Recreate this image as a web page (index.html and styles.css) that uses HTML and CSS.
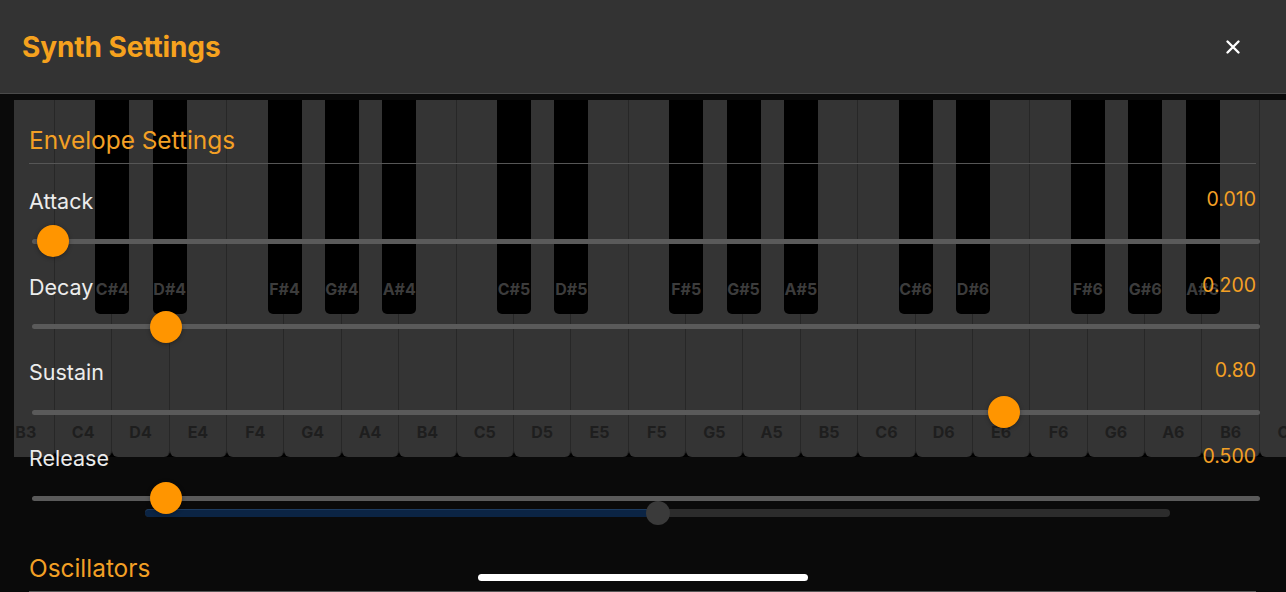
FILE: index.html
```html
<!DOCTYPE html>
<html lang="en">
<head>
<meta charset="utf-8">
<title>Synth Settings</title>
<link rel="stylesheet" href="styles.css">
</head>
<body>
<div class="screen">
  <header class="topbar">
    <h1 class="title">Synth Settings</h1>
    <button class="close" aria-label="Close">
      <svg width="16" height="16" viewBox="0 0 16 16"><path d="M2.5 2.5 L13.5 13.5 M13.5 2.5 L2.5 13.5" stroke="#fff" stroke-width="2.4" stroke-linecap="round"/></svg>
    </button>
  </header>
  <div class="stage">
    <div class="piano-layer">
      <div class="keyboard">
        <div class="keys">
          <div class="wkey"><span class="wlabel">B3</span></div>
          <div class="wkey"><span class="wlabel">C4</span><div class="bkey"><span class="blabel">C#4</span></div></div>
          <div class="wkey"><span class="wlabel">D4</span><div class="bkey"><span class="blabel">D#4</span></div></div>
          <div class="wkey"><span class="wlabel">E4</span></div>
          <div class="wkey"><span class="wlabel">F4</span><div class="bkey"><span class="blabel">F#4</span></div></div>
          <div class="wkey"><span class="wlabel">G4</span><div class="bkey"><span class="blabel">G#4</span></div></div>
          <div class="wkey"><span class="wlabel">A4</span><div class="bkey"><span class="blabel">A#4</span></div></div>
          <div class="wkey"><span class="wlabel">B4</span></div>
          <div class="wkey"><span class="wlabel">C5</span><div class="bkey"><span class="blabel">C#5</span></div></div>
          <div class="wkey"><span class="wlabel">D5</span><div class="bkey"><span class="blabel">D#5</span></div></div>
          <div class="wkey"><span class="wlabel">E5</span></div>
          <div class="wkey"><span class="wlabel">F5</span><div class="bkey"><span class="blabel">F#5</span></div></div>
          <div class="wkey"><span class="wlabel">G5</span><div class="bkey"><span class="blabel">G#5</span></div></div>
          <div class="wkey"><span class="wlabel">A5</span><div class="bkey"><span class="blabel">A#5</span></div></div>
          <div class="wkey"><span class="wlabel">B5</span></div>
          <div class="wkey"><span class="wlabel">C6</span><div class="bkey"><span class="blabel">C#6</span></div></div>
          <div class="wkey"><span class="wlabel">D6</span><div class="bkey"><span class="blabel">D#6</span></div></div>
          <div class="wkey"><span class="wlabel">E6</span></div>
          <div class="wkey"><span class="wlabel">F6</span><div class="bkey"><span class="blabel">F#6</span></div></div>
          <div class="wkey"><span class="wlabel">G6</span><div class="bkey"><span class="blabel">G#6</span></div></div>
          <div class="wkey"><span class="wlabel">A6</span><div class="bkey"><span class="blabel">A#6</span></div></div>
          <div class="wkey"><span class="wlabel">B6</span></div>
          <div class="wkey"><span class="wlabel">C7</span></div>
        </div>
      </div>
      <div class="scroller">
        <div class="scroll-fill" style="width: 50%"></div>
        <div class="scroll-thumb"></div>
      </div>
    </div>

    <div class="settings">
      <h2 class="section">Envelope Settings</h2>
      <div class="divider"></div>

      <div class="params">
        <div class="param">
          <div class="param-head"><span class="param-name">Attack</span><span class="param-value">0.010</span></div>
          <div class="slider"><div class="track"></div><div class="thumb" style="left: 5px"></div></div>
        </div>
        <div class="param">
          <div class="param-head"><span class="param-name">Decay</span><span class="param-value">0.200</span></div>
          <div class="slider"><div class="track"></div><div class="thumb" style="left: 118px"></div></div>
        </div>
        <div class="param">
          <div class="param-head"><span class="param-name">Sustain</span><span class="param-value">0.80</span></div>
          <div class="slider"><div class="track"></div><div class="thumb" style="left: 956px"></div></div>
        </div>
        <div class="param">
          <div class="param-head"><span class="param-name">Release</span><span class="param-value">0.500</span></div>
          <div class="slider"><div class="track"></div><div class="thumb" style="left: 118px"></div></div>
        </div>
      </div>

      <h2 class="section section-osc">Oscillators</h2>
      <div class="divider"></div>
    </div>

    <div class="home-indicator"></div>
  </div>
</div>
</body>
</html>
```

FILE: styles.css
```css
* { box-sizing: border-box; }

html, body {
  margin: 0;
  padding: 0;
  background: #0a0a0a;
}

body {
  font-family: Inter, "Liberation Sans", Arial, sans-serif;
  width: 1286px;
  height: 592px;
  overflow: hidden;
}

.screen {
  width: 1286px;
  height: 592px;
  display: flex;
  flex-direction: column;
  overflow: hidden;
}

.topbar {
  height: 94px;
  flex: none;
  background: #333333;
  border-bottom: 1px solid #4a4a4a;
  display: flex;
  align-items: center;
  justify-content: space-between;
  padding: 0 45px 0 22px;
}

.title {
  margin: 0;
  color: #f6a21e;
  font-size: 28px;
  font-weight: 700;
  letter-spacing: -0.1px;
}

.close {
  background: none;
  border: none;
  padding: 0;
  width: 16px;
  height: 16px;
  display: flex;
}

.stage {
  flex: 1;
  min-height: 0;
  display: grid;
  grid-template-columns: minmax(0, 1fr);
  grid-template-rows: minmax(0, 1fr);
  overflow: hidden;
}

.stage > * {
  grid-area: 1 / 1;
  min-width: 0;
}

/* Piano background layer */
.piano-layer {
  position: relative;
  z-index: 0;
  padding: 6px 0 0 14px;
  overflow: hidden;
}

.keyboard {
  height: 357px;
  overflow: hidden;
  background: #000;
}

.keys {
  display: flex;
  height: 100%;
  margin-left: -16.4px;
}

.wkey {
  position: relative;
  flex: none;
  width: 57.38px;
  height: 100%;
  background: #343434;
  border-right: 1.5px solid #272727;
  border-radius: 0 0 6px 6px;
  display: flex;
  align-items: flex-end;
  justify-content: center;
  padding-bottom: 14px;
}

.wlabel {
  color: #1e1e1e;
  font-size: 16px;
  font-weight: 700;
  line-height: 22px;
}

.bkey {
  position: absolute;
  z-index: 1;
  top: 0;
  left: 40.4px;
  width: 34px;
  height: 214px;
  background: #000;
  border-radius: 0 0 5px 5px;
  display: flex;
  align-items: flex-end;
  justify-content: center;
  padding-bottom: 14px;
}

.blabel {
  color: #3c3c3c;
  font-size: 16px;
  font-weight: 700;
  line-height: 22px;
  white-space: nowrap;
}

.scroller {
  margin: 52px 0 0 131px;
  width: 1025px;
  height: 8px;
  border-radius: 4px;
  background: #2c2c2c;
  display: flex;
  align-items: center;
}

.scroll-fill {
  height: 8px;
  border-radius: 4px;
  background: #0b2444;
  border-top: 1px solid #1c3a5e;
}

.scroll-thumb {
  width: 24px;
  height: 24px;
  border-radius: 50%;
  background: #3a3a3a;
  margin-left: -12px;
  flex: none;
}

/* Settings overlay */
.settings {
  position: relative;
  z-index: 2;
  padding: 31px 30px 0 29px;
  display: flex;
  flex-direction: column;
}

.section {
  margin: 0;
  color: #f3a025;
  font-size: 24.4px;
  font-weight: 400;
  line-height: 30px;
}

.divider {
  height: 1px;
  background: #565656;
  margin-top: 8px;
  flex: none;
}

.params {
  margin-top: 25px;
  display: flex;
  flex-direction: column;
}

.param {
  height: 85.7px;
  flex: none;
}

.param-head {
  display: flex;
  justify-content: space-between;
  align-items: center;
  height: 24px;
}

.param-name {
  color: #ececec;
  font-size: 21.5px;
  line-height: 24px;
}

.param-value {
  color: #f3a025;
  font-size: 19.5px;
  line-height: 22px;
  margin-top: -4px;
}

.slider {
  position: relative;
  margin: 12px -4px 0 3px;
  height: 32px;
  display: flex;
  align-items: center;
}

.track {
  flex: 1;
  height: 5px;
  border-radius: 3px;
  background: #5a5a5a;
}

.thumb {
  position: absolute;
  top: 0;
  width: 32px;
  height: 32px;
  border-radius: 50%;
  background: #ff9500;
  box-shadow: 0 1px 4px rgba(0, 0, 0, 0.35);
}

.section-osc {
  margin-top: 21px;
}

.home-indicator {
  position: relative;
  z-index: 3;
  align-self: end;
  justify-self: center;
  width: 330px;
  height: 7px;
  border-radius: 4px;
  background: #ffffff;
  margin-bottom: 11px;
}
```
